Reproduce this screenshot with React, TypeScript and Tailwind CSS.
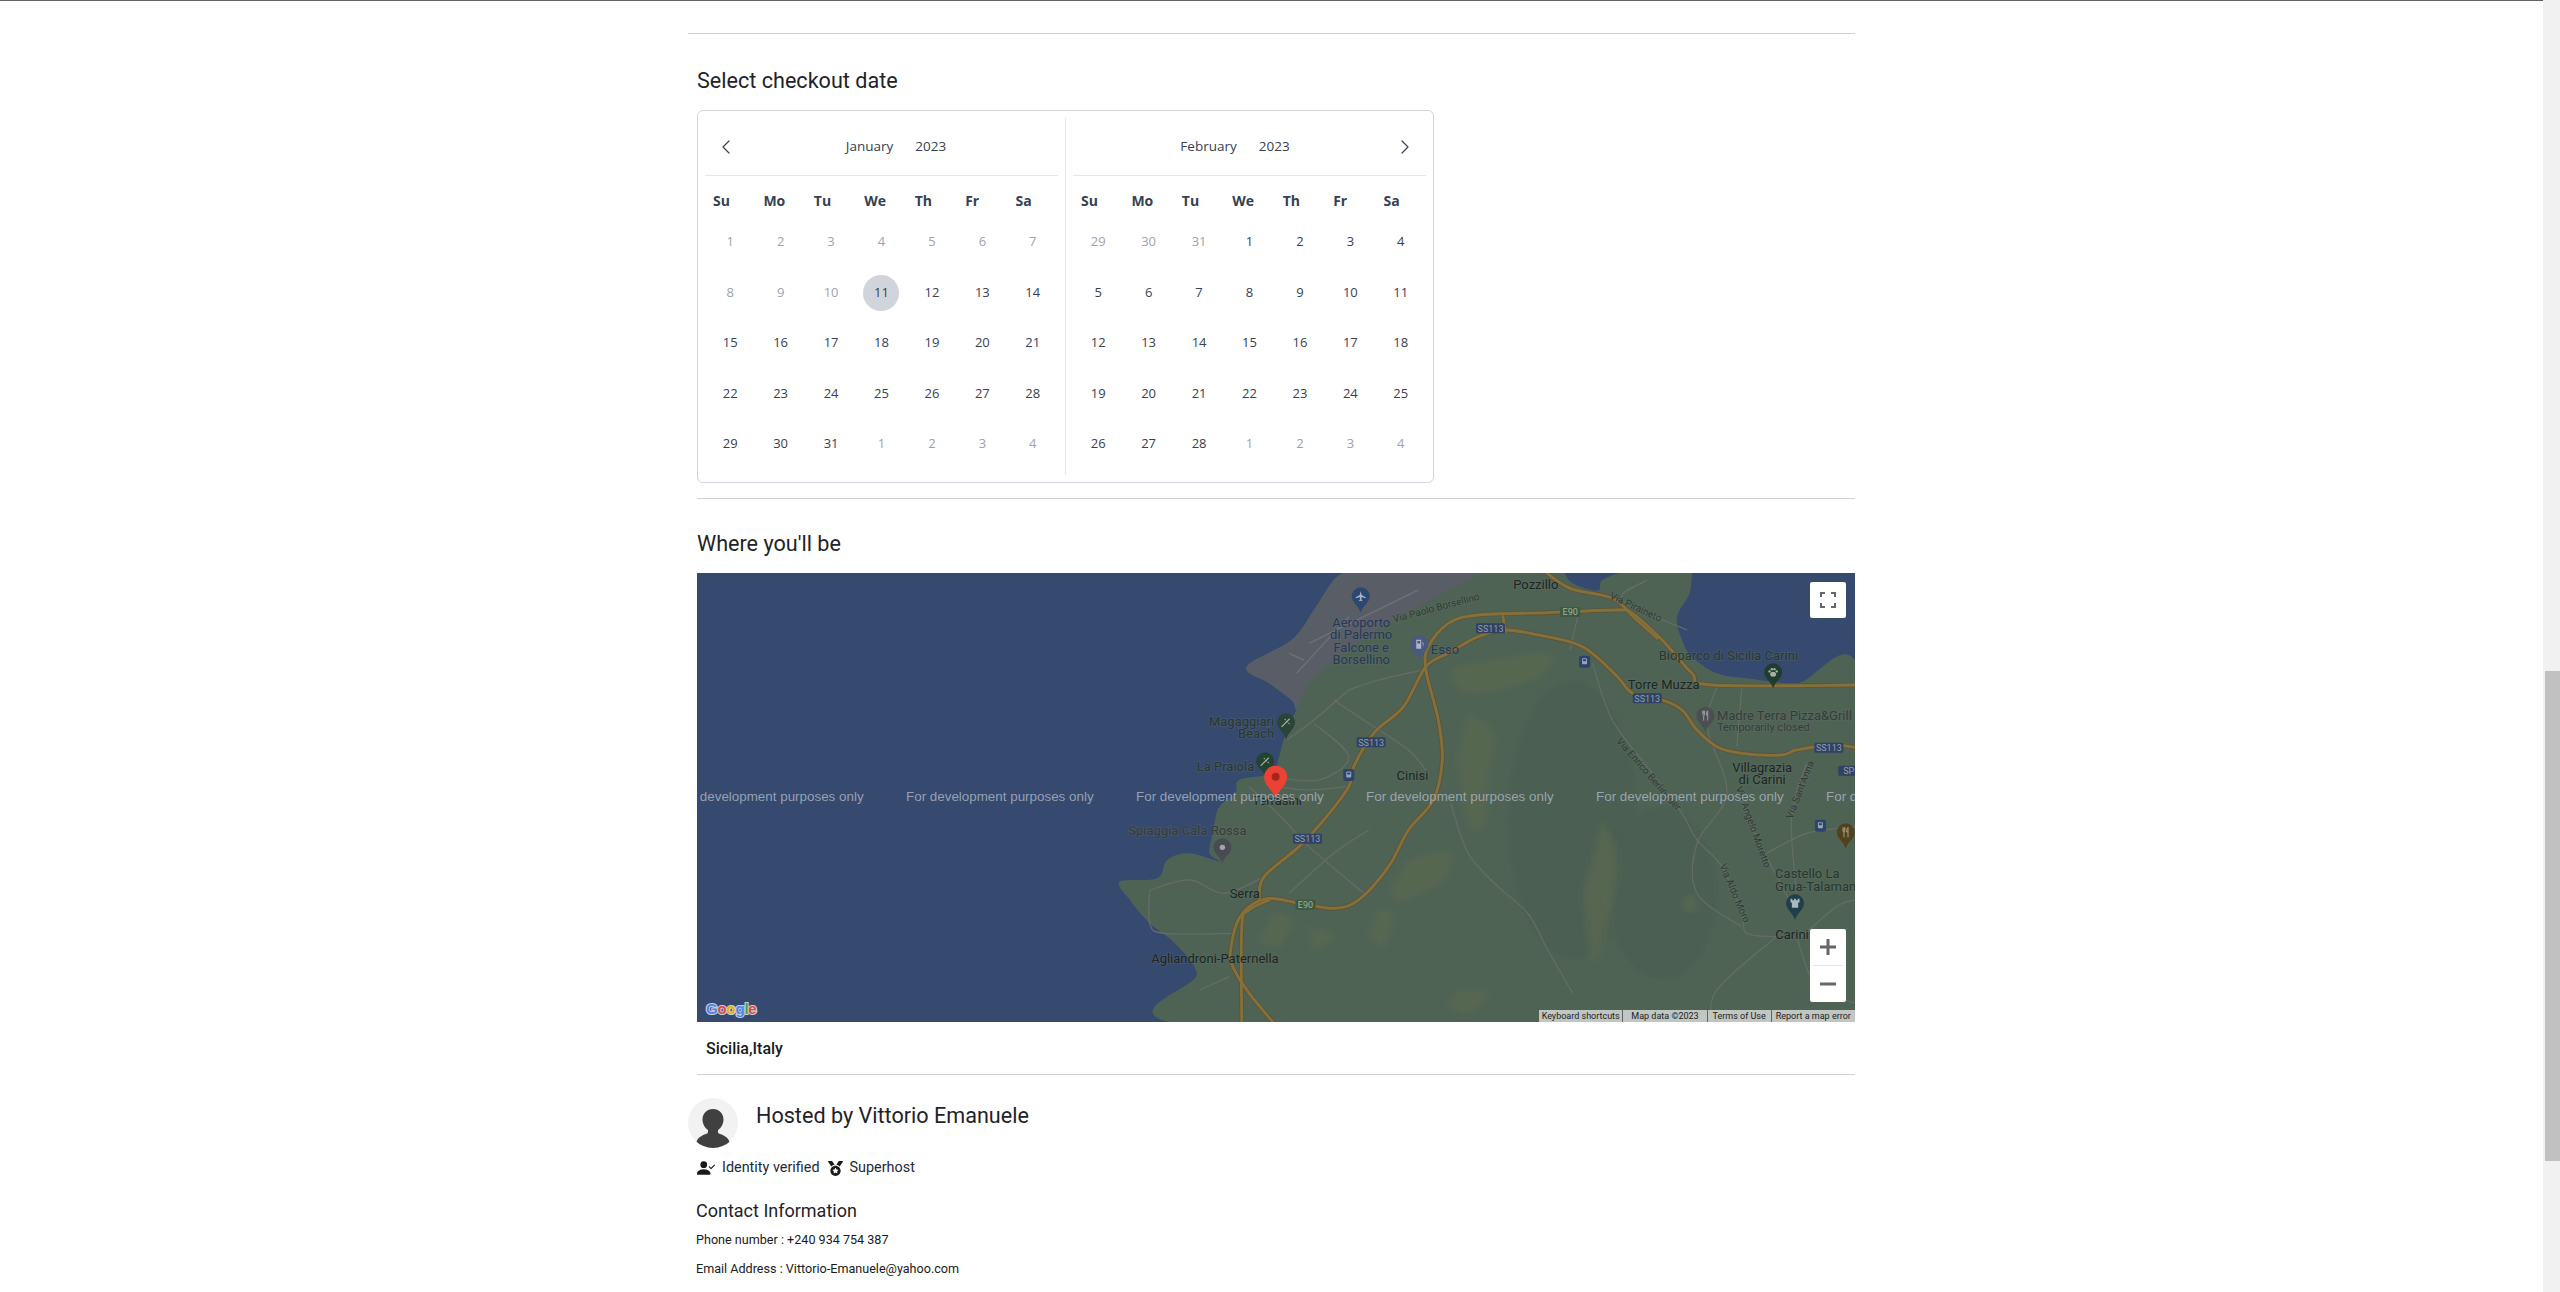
import React from "react";
import { ChevronLeft, ChevronRight } from "lucide-react";
import { BsPersonCheckFill } from "react-icons/bs";
import { FaMedal } from "react-icons/fa";

type Day = { n: number; muted?: boolean; selected?: boolean };

const WEEK = ["Su", "Mo", "Tu", "We", "Th", "Fr", "Sa"];

const range = (from: number, to: number, muted = false): Day[] => {
  const out: Day[] = [];
  for (let n = from; n <= to; n++) out.push({ n, muted });
  return out;
};

const JANUARY: Day[] = [
  ...range(1, 10, true),
  { n: 11, selected: true },
  ...range(12, 31),
  ...range(1, 4, true),
];

const FEBRUARY: Day[] = [...range(29, 31, true), ...range(1, 28), ...range(1, 4, true)];

function Month({ name, days, side }: { name: string; days: Day[]; side: "left" | "right" }) {
  return (
    <div className="w-[353px]">
      <div className="flex h-[58px] items-center border-b border-[#e5e7eb] text-[#374151]">
        {side === "left" && (
          <div className="flex w-[29px] justify-end">
            <ChevronLeft className="mr-[-4px] h-6 w-6" strokeWidth={1.2} />
          </div>
        )}
        <div className="flex flex-1 justify-center gap-[22px] text-[13.5px] font-medium">
          <span>{name}</span>
          <span>2023</span>
        </div>
        {side === "right" && (
          <div className="flex w-[29px] justify-start">
            <ChevronRight className="ml-[-4px] h-6 w-6" strokeWidth={1.2} />
          </div>
        )}
      </div>
      <div className="grid h-[41px] grid-cols-7 pt-[9px] text-[14px] font-bold leading-[32px] text-[#374151]">
        {WEEK.map((d) => (
          <div key={d} className="pl-[8px]">
            {d}
          </div>
        ))}
      </div>
      <div className="grid grid-cols-7 auto-rows-[50.4px] text-[13px]">
        {days.map((d, i) => (
          <div key={i} className="flex items-center justify-center">
            <span
              className={
                "flex h-9 w-9 items-center justify-center rounded-full " +
                (d.selected ? "bg-[#d1d5db] " : "") +
                (d.muted ? "text-[#9ca3af]" : "text-[#374151]")
              }
            >
              {d.n}
            </span>
          </div>
        ))}
      </div>
    </div>
  );
}

// map drawing: coordinates below were traced at 2.01x / 3x, the group transform brings them back
const X = (z: number) => 403 + z / 2.01;
const Y = (z: number) => z / 3 - 13;

function smooth(pts: number[][]) {
  let d = `M${pts[0][0]} ${pts[0][1]}`;
  for (let i = 0; i < pts.length - 1; i++) {
    const p0 = pts[i - 1] || pts[i];
    const p1 = pts[i];
    const p2 = pts[i + 1];
    const p3 = pts[i + 2] || p2;
    d += ` C${p1[0] + (p2[0] - p0[0]) / 6} ${p1[1] + (p2[1] - p0[1]) / 6} ${p2[0] - (p3[0] - p1[0]) / 6} ${p2[1] - (p3[1] - p1[1]) / 6} ${p2[0]} ${p2[1]}`;
  }
  return d;
}

const LAND = [
  [500, 30], [470, 60], [430, 150], [385, 240], [295, 320], [340, 370], [385, 420], [395, 445], [385, 480], [368, 545],
  [360, 590], [345, 640], [280, 660], [272, 700], [240, 740], [230, 790], [225, 830], [220, 880], [240, 905], [180, 880],
  [135, 900], [115, 955], [40, 965], [60, 1020], [100, 1090], [150, 1150], [195, 1240], [205, 1400],
  [1530, 1400], [1530, 355], [1400, 370], [1300, 355], [1240, 340], [1190, 290], [1170, 240], [1160, 170], [1185, 100],
  [1190, 30],
];

const AIRPORT = [
  [500, 30], [470, 60], [430, 150], [385, 240], [295, 320], [340, 370], [385, 420], [395, 445], [420, 370], [480, 290],
  [590, 180], [780, 30],
];

const POND = [[930, 30], [950, 70], [1000, 92], [1010, 60], [1060, 30]];

const E90 = [
  [1530, 375], [1230, 375], [1190, 340], [1130, 240], [1070, 160], [1040, 150], [900, 158], [760, 165], [700, 190], [660, 260],
  [655, 330], [680, 480], [688, 600], [670, 720], [620, 810], [580, 920], [520, 1020], [470, 1045], [400, 1030], [340, 1015],
  [300, 1040], [275, 1090], [262, 1180], [270, 1230], [300, 1300], [355, 1400],
];
const E90_NORTH = [[890, 30], [945, 85], [1030, 115], [1075, 175], [1120, 235]];
const E90_SOUTH = [[340, 1020], [300, 1050], [285, 1100], [285, 1400]];
const SS113 = [
  [1530, 565], [1470, 555], [1400, 570], [1370, 585], [1290, 580], [1240, 560], [1200, 510], [1170, 450], [1130, 420], [1070, 400],
  [1040, 350], [970, 260], [880, 225], [815, 210], [760, 230], [700, 280], [655, 320], [610, 440], [550, 520], [510, 620],
  [500, 680], [450, 780], [400, 860], [330, 950], [320, 1015],
];
const CONNECTOR = [[815, 215], [810, 170]];

const MINOR = [
  [[990, 310], [1030, 480], [1110, 640], [1170, 760], [1200, 840], [1250, 920], [1290, 1060], [1300, 1120], [1360, 1130]],
  [[1280, 690], [1310, 800], [1350, 920], [1400, 1060]],
  [[1420, 610], [1390, 770], [1400, 1000]],
  [[470, 420], [540, 490], [620, 570], [660, 640]],
  [[500, 390], [430, 480], [375, 540]],
  [[430, 490], [500, 590], [440, 660], [345, 650]],
  [[500, 680], [420, 690], [350, 680]],
  [[300, 680], [370, 780], [420, 860], [530, 1000]],
  [[540, 810], [470, 880], [380, 1000]],
  [[100, 990], [180, 960], [250, 1000], [330, 950]],
  [[100, 990], [100, 1090], [130, 1120], [270, 1120]],
  [[200, 1290], [260, 1250]],
  [[705, 730], [740, 880], [800, 980], [860, 1060], [900, 1170], [950, 1300]],
  [[1240, 380], [1220, 500], [1260, 700], [1200, 850], [1200, 1000], [1290, 1100]],
  [[1290, 385], [1280, 560]],
  [[1340, 880], [1420, 820], [1518, 800]],
  [[1100, 60], [1050, 120], [1180, 210]],
  [[960, 170], [945, 270]],
  [[1410, 1130], [1480, 1040], [1518, 1020]],
  [[1400, 1130], [1440, 1280], [1518, 1330]],
  [[1360, 1130], [1240, 1290], [1230, 1400]],
  [[650, 330], [560, 360], [500, 390]],
];

const PATCHES = [
  [[710, 320], [900, 280], [880, 350], [760, 400], [710, 370]],
  [[740, 460], [790, 520], [780, 640], [770, 800], [740, 780], [720, 600]],
  [[620, 900], [700, 880], [690, 960], [610, 1020], [580, 1000]],
  [[1010, 780], [1040, 900], [1020, 1100], [990, 1200], [970, 1000]],
  [[350, 1060], [385, 1080], [360, 1160], [320, 1140]],
  [[560, 1050], [590, 1060], [570, 1160], [540, 1120]],
  [[1190, 1000], [1200, 1040], [1180, 1060], [1170, 1020]],
  [[720, 1290], [780, 1300], [740, 1360], [700, 1340]],
  [[420, 1100], [470, 1130], [430, 1170]],
];

type PinKind = "plane" | "gas" | "paw" | "food" | "beach" | "castle" | "dot";
type Pin = { x: number; top: number; tip: number; fill: string; ink: string; kind: PinKind };

const PINS: Pin[] = [
  { x: 524, top: 82, tip: 158, fill: "#2d4870", ink: "#a9b6c9", kind: "plane" },
  { x: 642, top: 226, tip: 302, fill: "#49597f", ink: "#aeb6c8", kind: "gas" },
  { x: 1353, top: 310, tip: 385, fill: "#213b2c", ink: "#a5b0a6", kind: "paw" },
  { x: 1217, top: 440, tip: 516, fill: "#4b4f52", ink: "#a3a6a8", kind: "food" },
  { x: 374, top: 460, tip: 538, fill: "#2a4436", ink: "#a5b0a6", kind: "beach" },
  { x: 332, top: 577, tip: 650, fill: "#24432f", ink: "#a5b0a6", kind: "beach" },
  { x: 246, top: 835, tip: 910, fill: "#484c52", ink: "#a3a6a8", kind: "dot" },
  { x: 1499, top: 790, tip: 866, fill: "#52411e", ink: "#b0a68f", kind: "food" },
  { x: 1397, top: 1003, tip: 1080, fill: "#1f3f49", ink: "#a9b9bd", kind: "castle" },
];

function PinGlyph({ kind, ink }: { kind: PinKind; ink: string }) {
  if (kind === "plane")
    return <path d="M0-6 L1-1.500 L5.500 1 L5.500 2.200 L1 .8 L.8 3.800 L2 4.800 L2 5.500 L0 5 L-2 5.500 L-2 4.800 L-.8 3.800 L-1 .8 L-5.500 2.200 L-5.500 1 L-1-1.500Z" fill={ink} />;
  if (kind === "gas")
    return <path d="M-3.500-5 H2 V5 H-3.500Z M-2.200-3.800 V-1 H.8 V-3.800Z M3-3 L4.500-1.500 V3" fill={ink} fillRule="evenodd" />;
  if (kind === "paw")
    return (
      <g fill={ink}>
        <ellipse cx="0" cy="2.200" rx="3.300" ry="2.800" />
        <circle cx="-4" cy="-1" r="1.300" />
        <circle cx="-1.500" cy="-3.500" r="1.300" />
        <circle cx="1.500" cy="-3.500" r="1.300" />
        <circle cx="4" cy="-1" r="1.300" />
      </g>
    );
  if (kind === "food")
    return <path d="M-3-5.500 V-1.500 C-3-.5-2.500 0-2 0 V5.500 M-1-5.500 V-1.500 C-1-.5-1.500 0-2 0 M-2-5.500 V-2 M2.500 5.500 V-5.500 C1-4.500 1-1.500 1-.5 H2.500" fill="none" stroke={ink} strokeWidth={1} />;
  if (kind === "beach")
    return (
      <g fill="none" stroke={ink} strokeWidth={1.300}>
        <path d="M-5 5 L4-4" />
        <path d="M-1.500-3.500 L5 3" strokeDasharray="1.500 1.500" />
      </g>
    );
  if (kind === "castle")
    return <path d="M-5-5 H-3 V-3.500 H-1 V-5 H1 V-3.500 H3 V-5 H5 V-1 H3.500 V5 H-3.500 V-1 H-5Z" fill={ink} />;
  return <circle r={3} fill={ink} />;
}

function Teardrop({ x, top, tip, fill, w = 9, children }: { x: number; top: number; tip: number; fill: string; w?: number; children?: React.ReactNode }) {
  const cx = X(x);
  const t = Y(top);
  const b = Y(tip);
  const cy = t + w;
  return (
    <g>
      <path
        d={`M${cx} ${b} C${cx - 2} ${b - 7} ${cx - w} ${cy + w * 0.7} ${cx - w} ${cy} A${w} ${w} 0 1 1 ${cx + w} ${cy} C${cx + w} ${cy + w * 0.7} ${cx + 2} ${b - 7} ${cx} ${b} Z`}
        fill={fill}
      />
      {children}
    </g>
  );
}

const SHIELDS = [
  { x: 785, y: 205, t: "SS113", w: 29 },
  { x: 1100, y: 415, t: "SS113", w: 29 },
  { x: 545, y: 547, t: "SS113", w: 29 },
  { x: 417, y: 836, t: "SS113", w: 29 },
  { x: 1465, y: 563, t: "SS113", w: 29 },
  { x: 1510, y: 632, t: "SP3", w: 26 },
];

const GREEN_SHIELDS = [
  { x: 945, y: 156, t: "E90" },
  { x: 413, y: 1034, t: "E90" },
];

const TRAINS = [
  [974, 305],
  [500, 645],
  [1448, 797],
];

type Label = { x: number; y: number; t: string; c?: string; s?: number; a?: "start" | "middle" | "end"; r?: number };

const LABELS: Label[] = [
  { x: 876, y: 72, t: "Pozzillo", c: "#1c2622", a: "middle" },
  { x: 525, y: 186, t: "Aeroporto", c: "#26375c", a: "middle" },
  { x: 525, y: 224, t: "di Palermo", c: "#26375c", a: "middle" },
  { x: 525, y: 262, t: "Falcone e", c: "#26375c", a: "middle" },
  { x: 525, y: 299, t: "Borsellino", c: "#26375c", a: "middle" },
  { x: 665, y: 267, t: "Esso", c: "#26375c" },
  { x: 1123, y: 286, t: "Bioparco di Sicilia Carini", c: "#28382f" },
  { x: 1061, y: 374, t: "Torre Muzza", c: "#1c2622" },
  { x: 1240, y: 466, t: "Madre Terra Pizza&Grill", c: "#363c3a" },
  { x: 1240, y: 498, t: "Temporarily closed", c: "#363c3a", s: 11 },
  { x: 350, y: 483, t: "Magaggiari", c: "#28382f", a: "end" },
  { x: 350, y: 521, t: "Beach", c: "#28382f", a: "end" },
  { x: 310, y: 618, t: "La Praiola", c: "#28382f", a: "end" },
  { x: 628, y: 645, t: "Cinisi", c: "#1c2622", a: "middle" },
  { x: 1331, y: 622, t: "Villagrazia", c: "#1c2622", a: "middle" },
  { x: 1331, y: 659, t: "di Carini", c: "#1c2622", a: "middle" },
  { x: 356, y: 720, t: "Terrasini", c: "#1c2622", a: "middle" },
  { x: 57, y: 811, t: "Spiaggia Cala Rossa", c: "#363c3a" },
  { x: 1357, y: 941, t: "Castello La", c: "#28382f" },
  { x: 1357, y: 978, t: "Grua-Talamanca", c: "#28382f" },
  { x: 291, y: 1000, t: "Serra", c: "#1c2622", a: "middle" },
  { x: 1391, y: 1124, t: "Carini", c: "#1c2622", a: "middle" },
  { x: 231, y: 1194, t: "Agliandroni-Paternella", c: "#1c2622", a: "middle" },
  { x: 675, y: 140, t: "Via Paolo Borsellino", c: "#2f3b36", s: 10, a: "middle", r: -15 },
  { x: 1078, y: 138, t: "Via Piraineto", c: "#2f3b36", s: 10, a: "middle", r: 25 },
  { x: 1105, y: 640, t: "Via Enrico Berlinguer", c: "#2f3b36", s: 10, a: "middle", r: 49 },
  { x: 1315, y: 800, t: "Via Angelo Moretto", c: "#2f3b36", s: 10, a: "middle", r: 70 },
  { x: 1405, y: 688, t: "Via Sant'Anna", c: "#2f3b36", s: 10, a: "middle", r: -69 },
  { x: 1278, y: 998, t: "Via Aldo Moro", c: "#2f3b36", s: 10, a: "middle", r: 67 },
];

function MapPicture() {
  const zoomed = "translate(403 -13) scale(0.4975 0.3333)";
  const roads = [E90, E90_NORTH, E90_SOUTH, SS113, CONNECTOR];
  return (
    <svg className="absolute inset-0 h-full w-full" viewBox="0 0 1158 449" style={{ fontFamily: "Roboto, sans-serif" }}>
      <defs>
        <filter id="soft" x="-30%" y="-30%" width="160%" height="160%">
          <feGaussianBlur stdDeviation="6" />
        </filter>
      </defs>
      <rect width="1158" height="449" fill="#364a70" />
      <g transform={zoomed}>
        <path d={smooth(LAND) + " Z"} fill="#4f6355" />
        <path d={smooth(AIRPORT) + " Z"} fill="#595e66" />
        <path d={smooth(POND) + " Z"} fill="#364a70" />
        <ellipse cx="950" cy="780" rx="130" ry="420" fill="#4c5f52" filter="url(#soft)" />
        <ellipse cx="1130" cy="1000" rx="110" ry="260" fill="#4c5f52" filter="url(#soft)" />
        {PATCHES.map((p, i) => (
          <path key={i} d={smooth(p) + " Z"} fill="#586850" fillOpacity={0.8} filter="url(#soft)" />
        ))}
        <path d="M395 340 L500 170 M420 250 L640 90 M380 280 L410 300" stroke="#6b7077" strokeWidth={1.5} vectorEffect="non-scaling-stroke" fill="none" />
        {MINOR.map((p, i) => (
          <path key={i} d={smooth(p)} fill="none" stroke="#676c69" strokeWidth={1.2} vectorEffect="non-scaling-stroke" />
        ))}
        {roads.map((p, i) => (
          <path key={i} d={smooth(p)} fill="none" stroke="#5c5438" strokeWidth={4.6} vectorEffect="non-scaling-stroke" strokeLinecap="round" />
        ))}
        {roads.map((p, i) => (
          <path key={i} d={smooth(p)} fill="none" stroke="#86703a" strokeWidth={2.8} vectorEffect="non-scaling-stroke" strokeLinecap="round" />
        ))}
      </g>

      {LABELS.map((l, i) => (
        <text
          key={i}
          x={X(l.x)}
          y={Y(l.y) + 4.5}
          fontSize={l.s || 13}
          fill={l.c}
          stroke="#66736b"
          strokeOpacity={0.25}
          strokeWidth={2}
          textAnchor={l.a || "start"}
          transform={l.r ? `rotate(${l.r} ${X(l.x)} ${Y(l.y)})` : undefined}
          style={{ paintOrder: "stroke" }}
        >
          {l.t}
        </text>
      ))}

      {SHIELDS.map((s, i) => (
        <g key={i}>
          <rect x={X(s.x) - s.w / 2} y={Y(s.y) - 5} width={s.w} height={10} rx={1.5} fill="#2f4262" />
          <text x={X(s.x)} y={Y(s.y) + 3.2} fontSize={9} fill="#929eb2" textAnchor="middle">
            {s.t}
          </text>
        </g>
      ))}
      {GREEN_SHIELDS.map((s, i) => (
        <g key={i}>
          <rect x={X(s.x) - 10} y={Y(s.y) - 5} width={20} height={10} rx={1.5} fill="#3c5a3f" />
          <text x={X(s.x)} y={Y(s.y) + 3.2} fontSize={9} fill="#a4b09e" textAnchor="middle">
            {s.t}
          </text>
        </g>
      ))}
      {TRAINS.map(([x, y], i) => (
        <g key={i}>
          <rect x={X(x) - 5.5} y={Y(y) - 6} width={11} height={12} rx={2} fill="#2d4469" />
          <rect x={X(x) - 2.5} y={Y(y) - 3.5} width={5} height={6} rx={1} fill="#97a4b8" />
          <rect x={X(x) - 1.5} y={Y(y) - 2.5} width={3} height={2} fill="#2d4469" />
        </g>
      ))}

      {PINS.map((p, i) => (
        <Teardrop key={i} x={p.x} top={p.top} tip={p.tip} fill={p.fill}>
          <g transform={`translate(${X(p.x)} ${Y(p.top) + 9}) scale(0.9)`}>
            <PinGlyph kind={p.kind} ink={p.ink} />
          </g>
        </Teardrop>
      ))}
      <Teardrop x={353} top={617} tip={715} fill="#ea4335" w={11.5}>
        <circle cx={X(353)} cy={Y(617) + 11} r={4} fill="#a8241a" />
      </Teardrop>

      {[-21, 209, 439, 669, 899, 1129].map((x) => (
        <text
          key={x}
          x={x}
          y={228}
          fontSize={13.4}
          fill="#a9b2bf"
          fillOpacity={0.85}
          style={{ fontFamily: '"Liberation Sans", sans-serif' }}
        >
          For development purposes only
        </text>
      ))}

      <text
        x={9}
        y={441}
        fontSize={15}
        fontWeight={700}
        stroke="#c9cfd8"
        strokeWidth={2}
        style={{ paintOrder: "stroke", fontFamily: '"Liberation Sans", sans-serif', letterSpacing: "-0.2px" }}
      >
        <tspan fill="#4f83ee">G</tspan>
        <tspan fill="#e04a3f">o</tspan>
        <tspan fill="#eab308">o</tspan>
        <tspan fill="#4f83ee">g</tspan>
        <tspan fill="#3aa757">l</tspan>
        <tspan fill="#e04a3f">e</tspan>
      </text>
    </svg>
  );
}

function MapBlock() {
  return (
    <div className="relative h-[449px] w-[1158px] overflow-hidden">
      <MapPicture />
      <div className="absolute left-[1113px] top-[9px] flex h-9 w-9 items-center justify-center rounded-[2px] bg-white">
        <svg width="16" height="16" viewBox="0 0 16 16" fill="none" stroke="#666" strokeWidth="2">
          <path d="M1 5V1H5M11 1H15V5M15 11V15H11M5 15H1V11" />
        </svg>
      </div>
      <div className="absolute left-[1113px] top-[356px] flex h-[73px] w-9 flex-col items-center rounded-[2px] bg-white text-[#666]">
        <div className="flex h-9 w-full items-center justify-center">
          <svg width="18" height="18" viewBox="0 0 18 18" fill="#666">
            <path d="M7.500 1h3v6.500H17v3h-6.500V17h-3v-6.500H1v-3h6.500z" />
          </svg>
        </div>
        <div className="h-px w-[30px] bg-[#e6e6e6]" />
        <div className="flex h-9 w-full items-center justify-center">
          <svg width="18" height="18" viewBox="0 0 18 18" fill="#666">
            <path d="M1 7.500h16v3H1z" />
          </svg>
        </div>
      </div>
      <div className="absolute bottom-0 right-0 flex h-3 w-[316px] items-center justify-between divide-x divide-[#5f6664] bg-[#c0c6c2] font-['Roboto',sans-serif] text-[9px] leading-3 text-[#222]">
        <span className="flex-1 whitespace-nowrap text-center">Keyboard shortcuts</span>
        <span className="flex-1 whitespace-nowrap text-center">Map data ©2023</span>
        <span className="w-[64px] whitespace-nowrap text-center">Terms of Use</span>
        <span className="flex-1 whitespace-nowrap text-center">Report a map error</span>
      </div>
    </div>
  );
}

export default function App() {
  return (
    <div className="flex h-[1292px] overflow-hidden bg-white font-['Roboto',sans-serif]">
      <div className="min-w-0 flex-1">
        <div className="h-px bg-[#5f6368]" />
        <div className="ml-[688px] w-[1167px]">
          <div className="mt-8 h-px bg-[#d1d1d1]" />

          <div className="pl-[9px]">
            <h2 className="mt-[33px] text-[21.6px] leading-7 text-[#1f2328]">Select checkout date</h2>
            <div className="mt-[15px] flex h-[373px] w-[737px] gap-[7px] rounded-md border border-[#d1d5db] p-[7px] font-['Open_Sans',sans-serif]">
              <Month name="January" days={JANUARY} side="left" />
              <div className="w-px bg-[#e5e7eb]" />
              <Month name="February" days={FEBRUARY} side="right" />
            </div>
            <div className="mt-[15px] h-px bg-[#d1d1d1]" />

            <h2 className="mt-[31px] text-[21.6px] leading-7 text-[#1f2328]">Where you'll be</h2>
            <div className="mt-[15px]">
              <MapBlock />
            </div>
            <p className="mt-[15px] pl-[9px] text-base font-medium leading-6 text-[#1a1a1a]">Sicilia,Italy</p>
            <div className="mt-[13px] h-px bg-[#d1d1d1]" />
          </div>

          <div className="mt-[23px] flex items-start gap-[18px]">
            <div className="relative h-[50px] w-[50px] overflow-hidden rounded-full bg-[#f2f2f2]">
              <svg className="absolute inset-0" viewBox="0 0 50 50" fill="#404040">
                <path d="M25 11c6 0 10.500 4.500 10.500 10.500 0 4.500-2.500 8.500-5.500 10.500v2c0 1 .5 1.500 2 2 4.500 1.500 8.500 4 9.500 8 .5 2 .5 4 .5 6H8c0-2 0-4 .5-6 1-4 5-6.500 9.500-8 1.500-.5 2-1 2-2v-2c-3-2-5.500-6-5.500-10.500C14.500 15.500 19 11 25 11z" />
              </svg>
            </div>
            <h3 className="mt-[5px] text-[21.6px] leading-[26px] text-[#1f2328]">Hosted by Vittorio Emanuele</h3>
          </div>

          <div className="mt-[10px] flex h-5 items-center pl-[9px] text-[14.4px] text-[#1f2937]">
            <BsPersonCheckFill className="h-[18px] w-[18px] text-[#1a1a1a]" />
            <span className="ml-[7px]">Identity verified</span>
            <FaMedal className="ml-[8px] h-[15px] w-[15px] text-[#1a1a1a]" />
            <span className="ml-[7px]">Superhost</span>
          </div>

          <h4 className="mt-[21px] pl-2 text-lg leading-6 text-[#1f2328]">Contact Information</h4>
          <p className="mt-2 pl-2 text-[12.6px] leading-[17px] text-[#1a1a1a]">Phone number : +240 934 754 387</p>
          <p className="mt-3 pl-2 text-[12.6px] leading-[17px] text-[#1a1a1a]">Email Address : Vittorio-Emanuele@yahoo.com</p>
        </div>
      </div>
      <div className="w-[17px] shrink-0 bg-[#f1f1f1] pl-[2px] pt-[671px]">
        <div className="h-[490px] w-[15px] bg-[#c1c1c1]" />
      </div>
    </div>
  );
}
